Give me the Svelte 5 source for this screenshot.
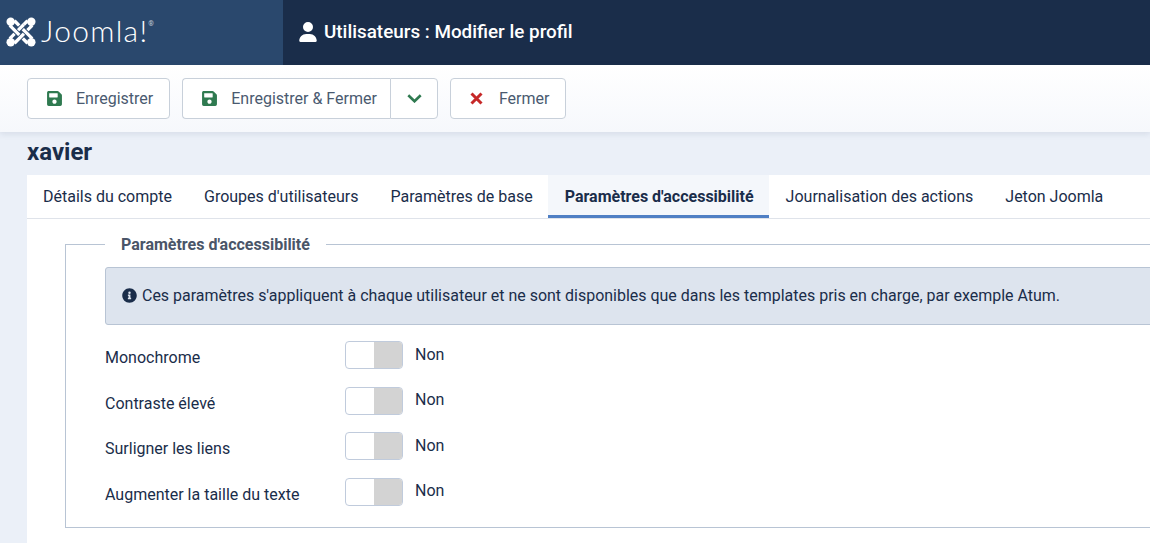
<script>
  const tabs = ["Détails du compte", "Groupes d'utilisateurs", "Paramètres de base", "Paramètres d'accessibilité", "Journalisation des actions", "Jeton Joomla"];
  const rows = ["Monochrome", "Contraste élevé", "Surligner les liens", "Augmenter la taille du texte"];
  const save = "M433.900 129.900l-83.900-83.900A48 48 0 0 0 316.100 32H48C21.500 32 0 53.500 0 80v352c0 26.500 21.500 48 48 48h352c26.500 0 48-21.500 48-48V163.900a48 48 0 0 0-14.100-34zM224 416c-35.300 0-64-28.700-64-64s28.700-64 64-64 64 28.700 64 64-28.700 64-64 64zm96-304.500V212c0 6.600-5.400 12-12 12H76c-6.600 0-12-5.400-12-12V108c0-6.600 5.400-12 12-12h228.500c3.200 0 6.200 1.300 8.500 3.500l3.500 3.500c2.200 2.300 3.500 5.300 3.500 8.500z";
  const s1 = "M4 9 L23 28";
  const s2 = "M9 4 L28 23";
  const s3 = "M23 4 L4 23";
  const s4 = "M28 9 L9 28";
</script>

<div class="page">
  <header class="top">
    <div class="brand">
      <svg class="mark" viewBox="0 0 32 32" width="30" height="30" aria-hidden="true">
        <g fill="none" stroke-linecap="butt">
          {#each [s3, s1, s4, s2, "M19 8 L13 14"] as d}
            <path {d} stroke="#2a486d" stroke-width="5.400" />
            <path {d} stroke="#fff" stroke-width="3.400" />
          {/each}
        </g>
        <g fill="#fff">
          <circle cx="5" cy="5" r="4.500" /><circle cx="27" cy="5" r="4.500" /><circle cx="5" cy="27" r="4.500" /><circle cx="27" cy="27" r="4.500" />
        </g>
      </svg>
      <span class="word">Joomla!</span><sup class="reg">®</sup>
    </div>
    <div class="title">
      <svg viewBox="0 0 448 512" width="18" height="20" aria-hidden="true"><path fill="#fff" d="M224 256a128 128 0 1 0 0-256 128 128 0 1 0 0 256zm-45.700 48C79.800 304 0 383.800 0 482.300 0 498.700 13.300 512 29.700 512h388.600c16.400 0 29.700-13.300 29.700-29.700C448 383.800 368.200 304 269.700 304h-91.400z"/></svg>
      <h1>Utilisateurs : Modifier le profil</h1>
    </div>
  </header>

  <nav class="toolbar">
    <button class="btn">
      <svg class="ic" viewBox="0 0 448 512" width="15" height="17" aria-hidden="true"><path fill="#2f7a50" d={save}/></svg>
      Enregistrer
    </button>
    <div class="group">
      <button class="btn joined">
        <svg class="ic" viewBox="0 0 448 512" width="15" height="17" aria-hidden="true"><path fill="#2f7a50" d={save}/></svg>
        Enregistrer &amp; Fermer
      </button>
      <button class="btn caret" aria-label="Plus">
        <svg viewBox="0 0 15 9" width="15" height="9" aria-hidden="true"><path d="M1.300 1.300 L7.500 7.300 L13.700 1.300" fill="none" stroke="#2f7a50" stroke-width="2.600"/></svg>
      </button>
    </div>
    <button class="btn shut">
      <svg class="ic close" viewBox="0 0 13 13" width="13" height="13" aria-hidden="true"><path d="M1.500 1.500 L11.500 11.500 M11.500 1.500 L1.500 11.500" fill="none" stroke="#c62828" stroke-width="3"/></svg>
      Fermer
    </button>
  </nav>

  <main class="content">
    <h2>xavier</h2>
    <section class="card">
      <div class="tabs">
        {#each tabs as t, i}
          <button class="tab" class:active={i === 3}>{t}</button>
        {/each}
      </div>
      <fieldset>
        <legend>Paramètres d'accessibilité</legend>
        <div class="alert">
          <svg viewBox="0 0 512 512" width="15" height="15" aria-hidden="true"><path fill="#1a2d4a" d="M256 8C119 8 8 119 8 256s111 248 248 248 248-111 248-248S393 8 256 8zm0 110a42 42 0 1 1 0 84 42 42 0 0 1 0-84zm56 254c0 7-5 12-12 12h-88c-7 0-12-5-12-12v-24c0-7 5-12 12-12h12v-64h-12c-7 0-12-5-12-12v-24c0-7 5-12 12-12h64c7 0 12 5 12 12v100h12c7 0 12 5 12 12v24z"/></svg>
          <span>Ces paramètres s'appliquent à chaque utilisateur et ne sont disponibles que dans les templates pris en charge, par exemple Atum.</span>
        </div>
        {#each rows as r}
          <div class="row">
            <div class="label">{r}</div>
            <div class="switch"><span class="off"></span></div>
            <div class="val">Non</div>
          </div>
        {/each}
      </fieldset>
    </section>
  </main>
</div>

<style>
  :global(body) { margin: 0; overflow: hidden; background: #ebf0f8; }
  .page { width: 1150px; height: 543px; overflow: hidden; font-family: Roboto, sans-serif; color: #1a2d4a; background: #ebf0f8; }
  .top { display: flex; height: 65px; background: #1a2d4a; }
  .brand { width: 283px; flex: none; box-sizing: border-box; background: #2a486d; display: flex; align-items: center; padding-left: 6px; color: #fff; }
  .mark { flex: none; margin-top: -1px; }
  .word { font-family: Lato, sans-serif; font-weight: 300; font-size: 30px; margin: -6px 0 0 5px; letter-spacing: 1.300px; }
  .reg { font-size: 7px; margin: -18px 0 0 0; align-self: center; opacity: .7; }
  .title { display: flex; align-items: center; gap: 7px; padding: 0 0 2px 16px; color: #fff; }
  h1 { margin: 0; font-size: 18.850px; font-weight: 500; }
  .toolbar { height: 67px; box-sizing: border-box; display: flex; align-items: center; gap: 12px; padding: 0 27px; background: linear-gradient(#fff, #f6f8fc); box-shadow: 0 2px 6px rgba(30, 50, 90, .1); position: relative; }
  .btn { height: 41px; box-sizing: border-box; display: flex; align-items: center; background: #fff; border: 1px solid #c8d0da; border-radius: 4px; font: 400 16px Roboto, sans-serif; color: #4a5a70; padding: 0 16px 0 19px; }
  .ic { margin-right: 14px; }
  .close { margin-right: 16px; }
  .group { display: flex; }
  .joined { border-radius: 4px 0 0 4px; border-right: 0; padding-right: 13px; }
  .caret { border-radius: 0 4px 4px 0; padding: 0 15px 0 16px; }
  .content { padding: 5px 0 0 27px; }
  h2 { margin: 0 0 8px; font-size: 24px; font-weight: 700; line-height: 30px; }
  .card { background: #fff; width: 1200px; height: 400px; }
  .tabs { display: flex; height: 44px; box-sizing: border-box; border-bottom: 1px solid #dfe3ea; }
  .tab { height: 43px; box-sizing: border-box; background: none; border: 0; font: 400 16px Roboto, sans-serif; color: #1a2d4a; padding: 0 16px; }
  .active { font-weight: 700; background: #f4f7fb; border-bottom: 3px solid #4f7fc4; margin: 0 1px 0 -1px; padding: 2px 15px 0 17px; }
  fieldset { margin: 16px 0 0 38px; padding: 13px 0 0 39px; width: 1100px; height: 293px; box-sizing: border-box; border: 1px solid #b8c4d4; }
  legend { padding: 0 16px; font-size: 16px; line-height: 19px; font-weight: 700; color: #4a5568; }
  .alert { display: flex; align-items: center; gap: 5px; height: 58px; box-sizing: border-box; padding: 0 0 2px 16px; background: #dde4ee; border: 1px solid #b8c4d4; border-radius: 3px; font-size: 15.970px; margin-bottom: 16px; }
  .row { display: flex; align-items: center; height: 28px; margin-bottom: 17.500px; }
  .label { width: 240px; font-size: 16px; padding-top: 5px; }
  .switch { position: relative; width: 58px; height: 28px; box-sizing: border-box; border: 1px solid #c0cbdc; border-radius: 4px; background: #fff; overflow: hidden; }
  .off { position: absolute; right: 0; top: 0; bottom: 0; width: 50%; background: #d3d3d3; }
  .val { margin-left: 12px; font-size: 16px; margin-top: -2px; }
</style>
